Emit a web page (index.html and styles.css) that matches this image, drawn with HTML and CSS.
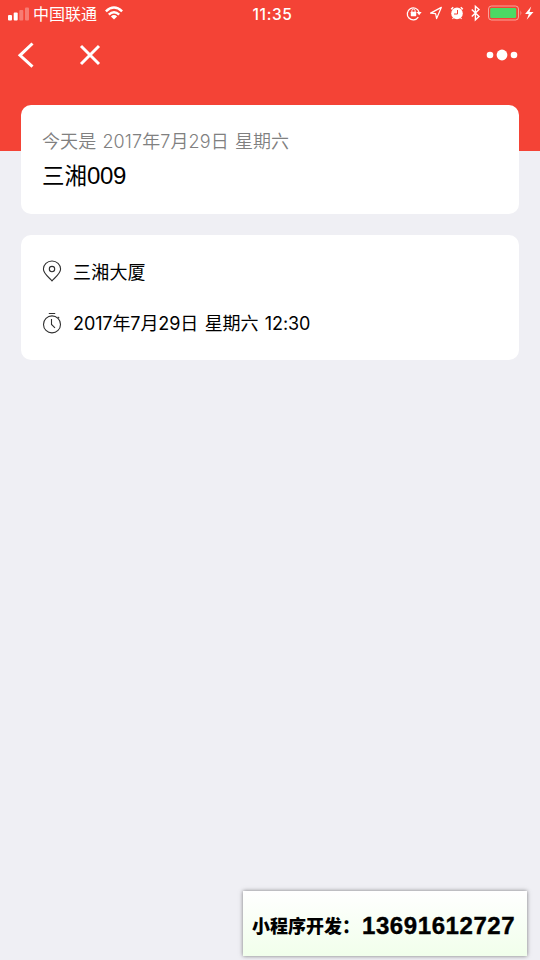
FILE: index.html
```html
<!DOCTYPE html>
<html lang="zh-CN">
<head>
<meta charset="utf-8">
<title>三湘009</title>
<link rel="stylesheet" href="styles.css">
</head>
<body>
<div class="screen">
  <header class="status">
    <div class="carrier">
      <svg width="22" height="14" viewBox="0 0 22 14" fill="#fff"><rect x="0" y="8" width="4" height="5.5" rx="1"/><rect x="5.7" y="5.5" width="4" height="8" rx="1"/><g opacity=".3"><rect x="11.3" y="3" width="4" height="10.5" rx="1"/><rect x="17" y=".5" width="4" height="13" rx="1"/></g></svg>
      <span class="carrier-name">中国联通</span>
      <svg class="wifi" width="18" height="14" viewBox="0 0 18 14" fill="none" stroke="#fff" stroke-width="2.5"><path d="M.9 5.3Q9-2.3 17.1 5.3M3.8 8.6Q9 3.9 14.2 8.6"/><path d="M5.9 10.4Q9 7.6 12.1 10.4L9 13.5Z" fill="#fff" stroke="none"/></svg>
    </div>
    <time class="clock">11:35</time>
    <svg class="indicators" width="128" height="18" viewBox="0 0 128 18" fill="none" stroke="#fff">
      <path d="M12.3 13.2A6 6 0 1 1 13 8" stroke-width="1.3"/><path d="M10.6 8h5l-2.4 3.2z" fill="#fff" stroke="none"/><rect x="4.8" y="7.8" width="5.4" height="4.4" rx=".4" fill="#fff" stroke="none"/><path d="M5.9 8V6.7a1.6 1.6 0 0 1 3.2 0V8" stroke-width="1"/>
      <path d="M35.3 3.4L24.6 9.1l5 .5 1 5z" stroke-width="1.2" stroke-linejoin="round"/>
      <circle cx="51" cy="9.4" r="5.8" fill="#fff" stroke="none"/><path d="M45.2 5.2l2-1.9M56.8 5.2l-2-1.9" stroke-width="1.5"/><path d="M47.3 14l-.8 1M54.7 14l.8 1" stroke-width="1.2"/><path d="M51.5 6v4H48" stroke="#f44336" stroke-width="1"/>
      <path d="M65.8 5.6l7.2 7-3.6 3.3V2.3L73 5.6l-7.2 7" stroke-width="1.4"/>
      <rect x="82.5" y="2" width="30" height="14" rx="3" opacity=".5"/><rect x="84.2" y="3.9" width="26" height="10.2" rx="1.3" fill="#4cd964" stroke="none"/><path d="M114.5 6.3q1.8 2.7 0 5.4z" fill="#fff" opacity=".5" stroke="none"/>
      <path d="M125.2 2.6l-6.1 7.3h3.7l-2.1 5.9 6.8-7.7h-4z" fill="#fff" stroke="none"/>
    </svg>
  </header>
  <nav class="nav">
    <svg class="back" width="18" height="28" viewBox="0 0 18 28"><path d="M15.5 2.5L3 14.3l12.5 11.4"/></svg>
    <svg class="close" width="22" height="22" viewBox="0 0 22 22"><path d="M2 2l18 18M20 2L2 20"/></svg>
    <svg class="more" width="32" height="14" viewBox="0 0 32 14"><circle cx="4" cy="7" r="3.3"/><circle cx="16" cy="7" r="5.4"/><circle cx="28" cy="7" r="3.3"/></svg>
  </nav>
  <main class="cards">
    <section class="card summary">
      <p class="today">今天是 2017年7月29日 星期六</p>
      <h1 class="title">三湘<span class="number">009</span></h1>
    </section>
    <section class="card details">
      <div class="row">
        <svg class="icon" width="20" height="22" viewBox="0 0 20 22"><path d="M10 20.8C7.8 18.2 1.4 14 1.4 9.1a8.6 8.1 0 0 1 17.2 0C18.6 14 12.2 18.2 10 20.8z"/><circle cx="10" cy="9.1" r="2.7"/></svg>
        <span class="place">三湘大厦</span>
      </div>
      <div class="row">
        <svg class="icon" width="20" height="22" viewBox="0 0 20 22"><circle cx="10" cy="12.4" r="8.5"/><path d="M6.8 1.5h6.4M15.7 4.9l1.6 1.2M9.5 7v5.4l3.5 3.5"/></svg>
        <span class="when">2017年7月29日 星期六 12:30</span>
      </div>
    </section>
  </main>
  <aside class="contact"><span class="contact-label">小程序开发：</span><span class="phone">13691612727</span></aside>
</div>
</body>
</html>
```
FILE: styles.css
```css
* { box-sizing: border-box; margin: 0; padding: 0; }
body { background: #efeff4; font-family: "Liberation Sans", "Noto Sans CJK SC", sans-serif; color: #000; }
svg { display: block; flex: none; }
.screen {
  position: relative;
  height: 960px;
  overflow: hidden;
  background: linear-gradient(#f44336 151.5px, #efeff4 151.5px);
}
.status {
  display: grid;
  grid-template-columns: 1fr auto 1fr;
  align-items: center;
  height: 28px;
  padding: 0 6px 0 8px;
  color: #fff;
}
.carrier { display: flex; align-items: center; }
.carrier-name { margin: 2px 0 0 3px; font-size: 16px; line-height: 24px; font-weight: 400; white-space: nowrap; }
.wifi { margin-left: 8px; margin-top: -2px; }
.clock { margin-left: 3px; font-family: Inter, sans-serif; font-size: 15.5px; font-weight: 500; letter-spacing: .6px; }
.indicators { justify-self: end; margin-top: -2px; }
.nav { display: flex; align-items: center; height: 54px; padding: 0 22px 0 17px; }
.back, .close { fill: none; stroke: #fff; stroke-width: 3; }
.close { margin-left: 44px; }
.more { margin-left: auto; fill: #fff; }
.cards { display: flex; flex-direction: column; gap: 21px; padding: 22.5px 21px 0; }
.card { background: #fff; border-radius: 10px; padding: 0 21px; }
.summary { height: 109.5px; padding-top: 23.5px; }
.today { font-family: Inter, "Noto Sans CJK SC", sans-serif; font-size: 18px; line-height: 28px; font-weight: 350; color: #808080; letter-spacing: .1px; word-spacing: 1px; white-space: nowrap; }
.title { font-size: 22.5px; line-height: 39px; font-weight: 400; }
.number { font-size: 24px; letter-spacing: -.3px; }
.details { display: flex; flex-direction: column; height: 125px; padding-top: 10px; }
.row { display: flex; align-items: center; gap: 11px; height: 52px; font-size: 18px; white-space: nowrap; }
.place { letter-spacing: .2px; }
.when { margin-top: -2px; font-family: Inter, "Noto Sans CJK SC", sans-serif; font-size: 18px; letter-spacing: -.1px; word-spacing: 1.5px; }
.icon { fill: none; stroke: #303030; stroke-width: 1.1; }
.contact {
  position: absolute;
  left: 243px;
  top: 891px;
  display: flex;
  align-items: center;
  width: 284px;
  height: 65px;
  padding: 4px 0 0 9px;
  background: linear-gradient(#fff, #f1ffeb);
  box-shadow: 0 0 4px rgba(0, 0, 0, .5);
  font-weight: 700;
  white-space: nowrap;
}
.contact-label { width: 110px; margin-top: -1px; font-size: 18px; font-weight: 900; }
.phone { font-size: 24px; letter-spacing: .58px; -webkit-text-stroke: .4px #000; }
```
